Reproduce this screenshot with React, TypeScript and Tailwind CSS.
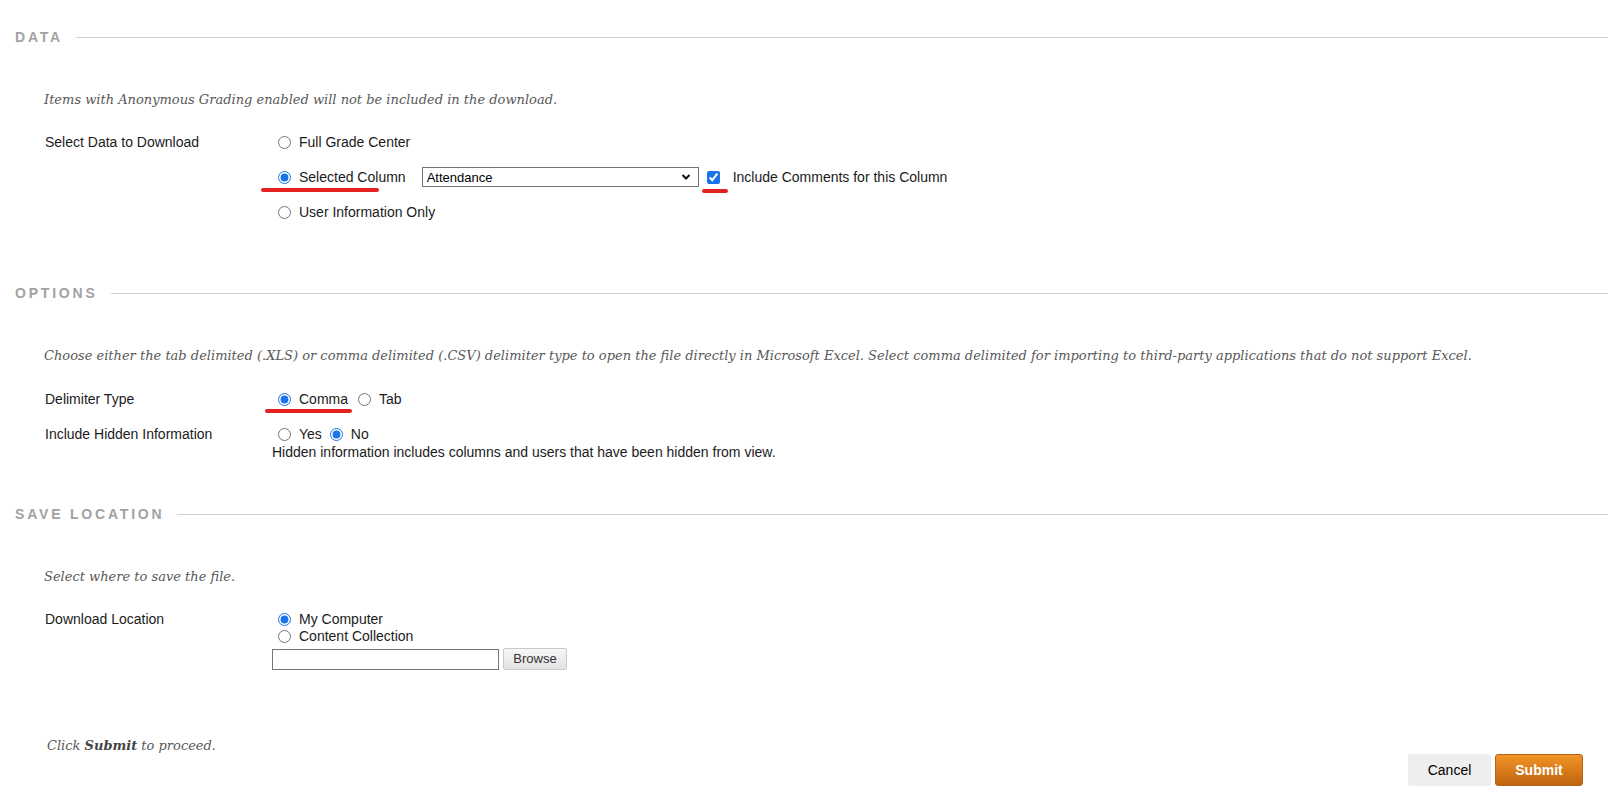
import React from 'react';

const sans = "font-['Liberation_Sans',Arial,sans-serif]";
const serif = "font-['DejaVu_Serif',Georgia,serif]";

function SectionHeader({ title }: { title: string }) {
    return (
        <div className="flex items-center h-[20px] pl-[15px] pr-[12px]">
            <span className="text-[14px] font-bold tracking-[2.8px] text-[#a2a2a2] leading-[20px]">{title}</span>
            <div className="flex-1 h-px bg-[#cfcfcf] ml-[13px]" />
        </div>
    );
}

function Radio({ checked, name }: { checked?: boolean; name: string }) {
    return (
        <input
            type="radio"
            name={name}
            defaultChecked={checked}
            className="m-0 w-[13px] h-[13px] shrink-0 accent-[#1a73e8]"
        />
    );
}

function Underline({ className }: { className: string }) {
    // red annotation marks drawn over the form
    return <span className={`absolute h-[4px] rounded-full bg-[#e42121] ${className}`} />;
}

export default function App() {
    return (
        <div className={`min-h-screen bg-white text-[14px] text-[#1b1b1b] ${sans} pt-[27px]`}>

            {/* Data */}
            <SectionHeader title="DATA" />
            <p className={`mt-[43px] ml-[44px] h-[20px] leading-[20px] italic text-[13px] text-[#585858] ${serif}`}>
                Items with Anonymous Grading enabled will not be included in the download.
            </p>
            <div className="flex mt-[22px] pl-[45px]">
                <div className="w-[227px] h-[20px] leading-[20px]">Select Data to Download</div>
                <div className="flex flex-col gap-[15px]">
                    <label className="flex items-center h-[20px]">
                        <span className="ml-[6px] flex"><Radio name="data" /></span>
                        <span className="ml-[8px]">Full Grade Center</span>
                    </label>
                    <div className="relative flex items-center h-[20px]">
                        <span className="ml-[6px] flex"><Radio name="data" checked /></span>
                        <span className="ml-[8px]">Selected Column</span>
                        <div className="relative ml-[16px] w-[277px] h-[20px]">
                            <select className="appearance-none w-full h-full border border-[#767676] bg-white text-[13px] pl-[4px] text-black outline-none">
                                <option>Attendance</option>
                            </select>
                            <svg className="absolute right-[8px] top-[6px] pointer-events-none" width="10" height="8" viewBox="0 0 10 8">
                                <path d="M1.5 2 L5 5.5 L8.5 2" fill="none" stroke="#111" strokeWidth="2" />
                            </svg>
                        </div>
                        <input type="checkbox" defaultChecked className="m-0 ml-[8px] w-[13px] h-[13px] accent-[#1a73e8]" />
                        <span className="ml-[13px]">Include Comments for this Column</span>
                        <Underline className="left-[-11px] top-[21px] w-[118px]" />
                        <Underline className="left-[430px] top-[22px] w-[26px]" />
                    </div>
                    <label className="flex items-center h-[20px]">
                        <span className="ml-[6px] flex"><Radio name="data" /></span>
                        <span className="ml-[8px]">User Information Only</span>
                    </label>
                </div>
            </div>

            {/* Options */}
            <div className="mt-[61px]">
                <SectionHeader title="OPTIONS" />
            </div>
            <p className={`mt-[43px] ml-[44px] h-[20px] leading-[20px] italic text-[13px] text-[#585858] ${serif}`}>
                Choose either the tab delimited (.XLS) or comma delimited (.CSV) delimiter type to open the file directly in Microsoft Excel. Select comma delimited for importing to third-party applications that do not support Excel.
            </p>
            <div className="flex mt-[23px] pl-[45px]">
                <div className="w-[227px] h-[20px] leading-[20px]">Delimiter Type</div>
                <div className="relative flex items-center h-[20px]">
                    <span className="ml-[6px] flex"><Radio name="delim" checked /></span>
                    <span className="ml-[8px]">Comma</span>
                    <span className="ml-[10px] flex"><Radio name="delim" /></span>
                    <span className="ml-[8px]">Tab</span>
                    <Underline className="left-[-7px] top-[20px] w-[87px]" />
                </div>
            </div>
            <div className="flex mt-[15px] pl-[45px]">
                <div className="w-[227px] h-[20px] leading-[20px]">Include Hidden Information</div>
                <div className="flex flex-col">
                    <div className="flex items-center h-[20px]">
                        <span className="ml-[6px] flex"><Radio name="hidden" /></span>
                        <span className="ml-[8px]">Yes</span>
                        <span className="ml-[8px] flex"><Radio name="hidden" checked /></span>
                        <span className="ml-[8px]">No</span>
                    </div>
                    <div className="leading-[17px]">Hidden information includes columns and users that have been hidden from view.</div>
                </div>
            </div>

            {/* Save location */}
            <div className="mt-[43px]">
                <SectionHeader title="SAVE LOCATION" />
            </div>
            <p className={`mt-[43px] ml-[44px] h-[20px] leading-[20px] italic text-[13px] text-[#585858] ${serif}`}>
                Select where to save the file.
            </p>
            <div className="flex mt-[24px] pl-[45px]">
                <div className="w-[227px] h-[17px] leading-[17px]">Download Location</div>
                <div className="flex flex-col">
                    <label className="flex items-center h-[17px]">
                        <span className="ml-[6px] flex"><Radio name="loc" checked /></span>
                        <span className="ml-[8px]">My Computer</span>
                    </label>
                    <label className="flex items-center h-[17px]">
                        <span className="ml-[6px] flex"><Radio name="loc" /></span>
                        <span className="ml-[8px]">Content Collection</span>
                    </label>
                    <div className="flex items-center mt-[3px] gap-[4px]">
                        <input type="text" className="w-[227px] h-[21px] border border-[#767676] bg-white px-1 text-[13px] outline-none" />
                        <button className="w-[64px] h-[22px] border border-[#c9c9c9] rounded-[2px] bg-gradient-to-b from-[#f7f7f7] to-[#e2e2e2] text-[13px] text-[#333]">
                            Browse
                        </button>
                    </div>
                </div>
            </div>

            {/* Submit */}
            <p className={`mt-[66px] ml-[47px] h-[20px] leading-[20px] italic text-[13px] text-[#585858] ${serif}`}>
                Click <b className="font-bold text-[#444]">Submit</b> to proceed.
            </p>
            <div className="flex justify-end gap-[4px] pr-[37px] pb-[8px] -mt-[2px]">
                <button className="w-[83px] h-[32px] rounded-[3px] bg-[#eeeeee] text-[14px] text-black">Cancel</button>
                <button className="w-[88px] h-[32px] rounded-[3px] border border-[#b5641b] bg-gradient-to-b from-[#f39426] to-[#bf640f] text-[14px] font-bold text-white">
                    Submit
                </button>
            </div>
        </div>
    );
}
